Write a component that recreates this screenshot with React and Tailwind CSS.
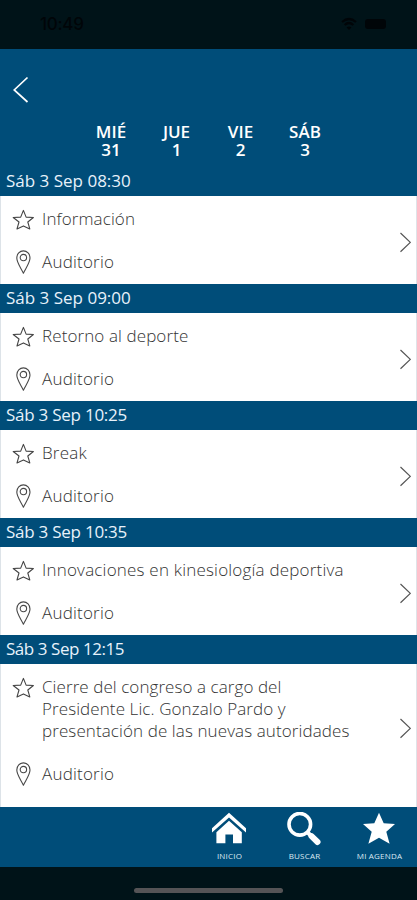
const sessions = [
  { time: "Sáb 3 Sep 08:30", track: "tracking-[0px]", lines: [["Información", "tracking-[0.1px]"]] },
  { time: "Sáb 3 Sep 09:00", track: "tracking-[0px]", lines: [["Retorno al deporte", "tracking-[0.1px]"]] },
  { time: "Sáb 3 Sep 10:25", track: "tracking-[-0.25px]", lines: [["Break", "tracking-[0.2px]"]] },
  { time: "Sáb 3 Sep 10:35", track: "tracking-[-0.25px]", lines: [["Innovaciones en kinesiología deportiva", "tracking-[0.2px]"]] },
  {
    time: "Sáb 3 Sep 12:15",
    track: "tracking-[-0.45px]",
    tall: true,
    lines: [
      ["Cierre del congreso a cargo del", "tracking-[0.07px]"],
      ["Presidente Lic. Gonzalo Pardo y", "tracking-[0.09px]"],
      ["presentación de las nuevas autoridades", "tracking-[0.1px]"],
    ],
  },
];

const days = [
  ["MIÉ", "31", "w-[66px]"],
  ["JUE", "1", "w-[65px]"],
  ["VIE", "2", "w-[63px]"],
  ["SÁB", "3", "w-[66px]"],
];

function StatusBar() {
  return (
    <div className="flex h-[49px] shrink-0 items-start bg-[#001318] text-[#000508]">
      <span className="ml-[40px] mt-[13px] font-[Inter] text-[17px] font-medium leading-[22px] tracking-[-0.3px]">10:49</span>
      <svg className="ml-auto mt-[17px] h-[14px] w-[16px]" viewBox="0 0 16 14" fill="none" stroke="currentColor" strokeWidth="2.2">
        <path d="M1 5Q8-1 15 5M3.6 8Q8 4 12.4 8" />
        <path d="M8 13 5.6 10.4Q8 8.6 10.4 10.4Z" fill="currentColor" stroke="none" />
      </svg>
      <span className="ml-[8px] mr-[31px] mt-[19px] h-[10px] w-[21px] rounded-[3px] bg-[#000508]" />
    </div>
  );
}

function StarOutline() {
  return (
    <svg className="ml-[12px] mt-px h-[22px] w-[22px] shrink-0" viewBox="0 0 22 22" fill="none" stroke="#444" strokeWidth="1.1" strokeLinejoin="round">
      <path d="M11.4 1.4 14.1 8.1 21.4 8.5 15.8 13 17.8 19.9 11.4 16.9 5 19.9 7 13 1.2 8.5 8.7 8.1Z" />
    </svg>
  );
}

function Pin() {
  return (
    <svg className="ml-[15px] mr-[3px] h-[24px] w-[16px] shrink-0" viewBox="0 0 16 24" fill="none" stroke="#484848" strokeWidth="1.1" strokeLinejoin="round">
      <path d="M8.4 23.2C6.4 18.7 1.8 12.8 1.8 8A6.6 7.1 0 0 1 15 8C15 12.8 10.4 18.7 8.4 23.2Z" />
      <circle cx="8.4" cy="7.6" r="3.2" />
    </svg>
  );
}

function Session({ session, first }) {
  return (
    <section className="shrink-0">
      {!first && <TimeBand session={session} />}
      <div className={session.tall ? "flex h-[143px] bg-white" : "flex h-[88px] bg-white"}>
        <div className="-mr-[40px] flex flex-1 flex-col border-l border-[#dde3e8] pt-[12px]">
          <div className="-ml-px flex items-start">
            <StarOutline />
            <div className="ml-[8px]">
              {session.lines.map(([text, track]) => (
                <p key={text} className={"whitespace-nowrap leading-[22px] " + track}>{text}</p>
              ))}
            </div>
          </div>
          <div className={session.tall ? "-ml-px mt-[21px] flex h-[22px] items-center" : "-ml-px mt-[19px] flex h-[24px] items-center"}>
            <Pin />
            <p className="ml-[8px] leading-[22px] tracking-[0.2px]">Auditorio</p>
          </div>
        </div>
        <div className={session.tall ? "flex w-[40px] justify-end border-r border-[#dfe3e8] pr-[5px] pt-[54px]" : "flex w-[40px] justify-end border-r border-[#dfe3e8] pr-[5px] pt-[36px]"}>
          <svg className="h-[21px] w-[12px]" viewBox="0 0 12 21" fill="none" stroke="#555" strokeWidth="1.2">
            <path d="M1.5 1 11.3 10.4 1.5 19.8" />
          </svg>
        </div>
      </div>
    </section>
  );
}

function TimeBand({ session }) {
  return (
    <h2 className={"h-[29px] bg-[#004d79] pl-[6px] text-[17px] font-normal leading-[28px] text-[#e8f2fb] " + session.track}>{session.time}</h2>
  );
}

function NavBar() {
  return (
    <nav className="flex h-[60px] shrink-0 justify-end bg-[#004d79] pr-px text-[8px] font-normal leading-[10px] text-[#dce9f2]">
      <div className="flex w-[75px] flex-col items-center">
        <svg className="mt-[5px] h-[34px] w-[36px]" viewBox="0 0 36 34" fill="white">
          <path d="M1 16.2 18 .8 35 16.2V20.4L18 5.6 1 20.4Z" />
          <path d="M5.4 20.2 18 8.8 30.8 20.2V31.2H22V22.4H14.4V31.2H5.4Z" />
        </svg>
        <span className="ml-[2px] mt-[5px] tracking-[0.2px]">INICIO</span>
      </div>
      <div className="flex w-[75px] flex-col items-center">
        <svg className="mt-[5px] h-[34px] w-[36px]" viewBox="0 0 36 34" fill="none" stroke="white">
          <circle cx="13.8" cy="12.3" r="10.8" strokeWidth="3.6" />
          <path d="M21.2 20 24.5 23.2" strokeWidth="4" />
          <path d="M25.5 24.2 31.5 30" strokeWidth="6" strokeLinecap="round" />
        </svg>
        <span className="ml-[2px] mt-[5px] tracking-[0.2px]">BUSCAR</span>
      </div>
      <div className="flex w-[75px] flex-col items-center">
        <svg className="mt-[5px] h-[34px] w-[36px]" viewBox="0 0 36 34" fill="white">
          <path d="M18 .8 22.7 11.3 34 12 25.3 19.8 28.6 31.8 18 25.8 7.4 31.8 10.7 19.8 2 12 13.3 11.3Z" />
        </svg>
        <span className="ml-[2px] mt-[5px] whitespace-nowrap tracking-[0.2px]">MI AGENDA</span>
      </div>
    </nav>
  );
}

export default function App() {
  return (
    <main className="flex h-[900px] w-[417px] flex-col overflow-hidden bg-[#001318] font-['Open_Sans','Noto_Sans',sans-serif] text-[17px] font-light text-[#333]">
      <StatusBar />
      <header className="h-[147px] shrink-0 bg-[#004d79] text-white">
        <svg className="ml-[13px] box-border h-[54px] w-[16px] pt-[27px]" viewBox="0 0 16 27" fill="none" stroke="white" strokeWidth="1.7">
          <path d="M14.5 1.5 1.2 14 14.5 26" />
        </svg>
        <div className="ml-[78px] mt-[20px] flex h-[44px] text-center text-[17px] font-semibold leading-[18px]">
          {days.map(([day, date, width]) => (
            <div key={day} className={"shrink-0 " + width}>
              <p>{day}</p>
              <p>{date}</p>
            </div>
          ))}
        </div>
        <TimeBand session={sessions[0]} />
      </header>
      {sessions.map((session, index) => (
        <Session key={session.time} session={session} first={index === 0} />
      ))}
      <NavBar />
      <div className="flex h-[33px] justify-center pt-[21px]">
        <span className="h-[5px] w-[149px] rounded-full bg-[#555456]" />
      </div>
    </main>
  );
}
